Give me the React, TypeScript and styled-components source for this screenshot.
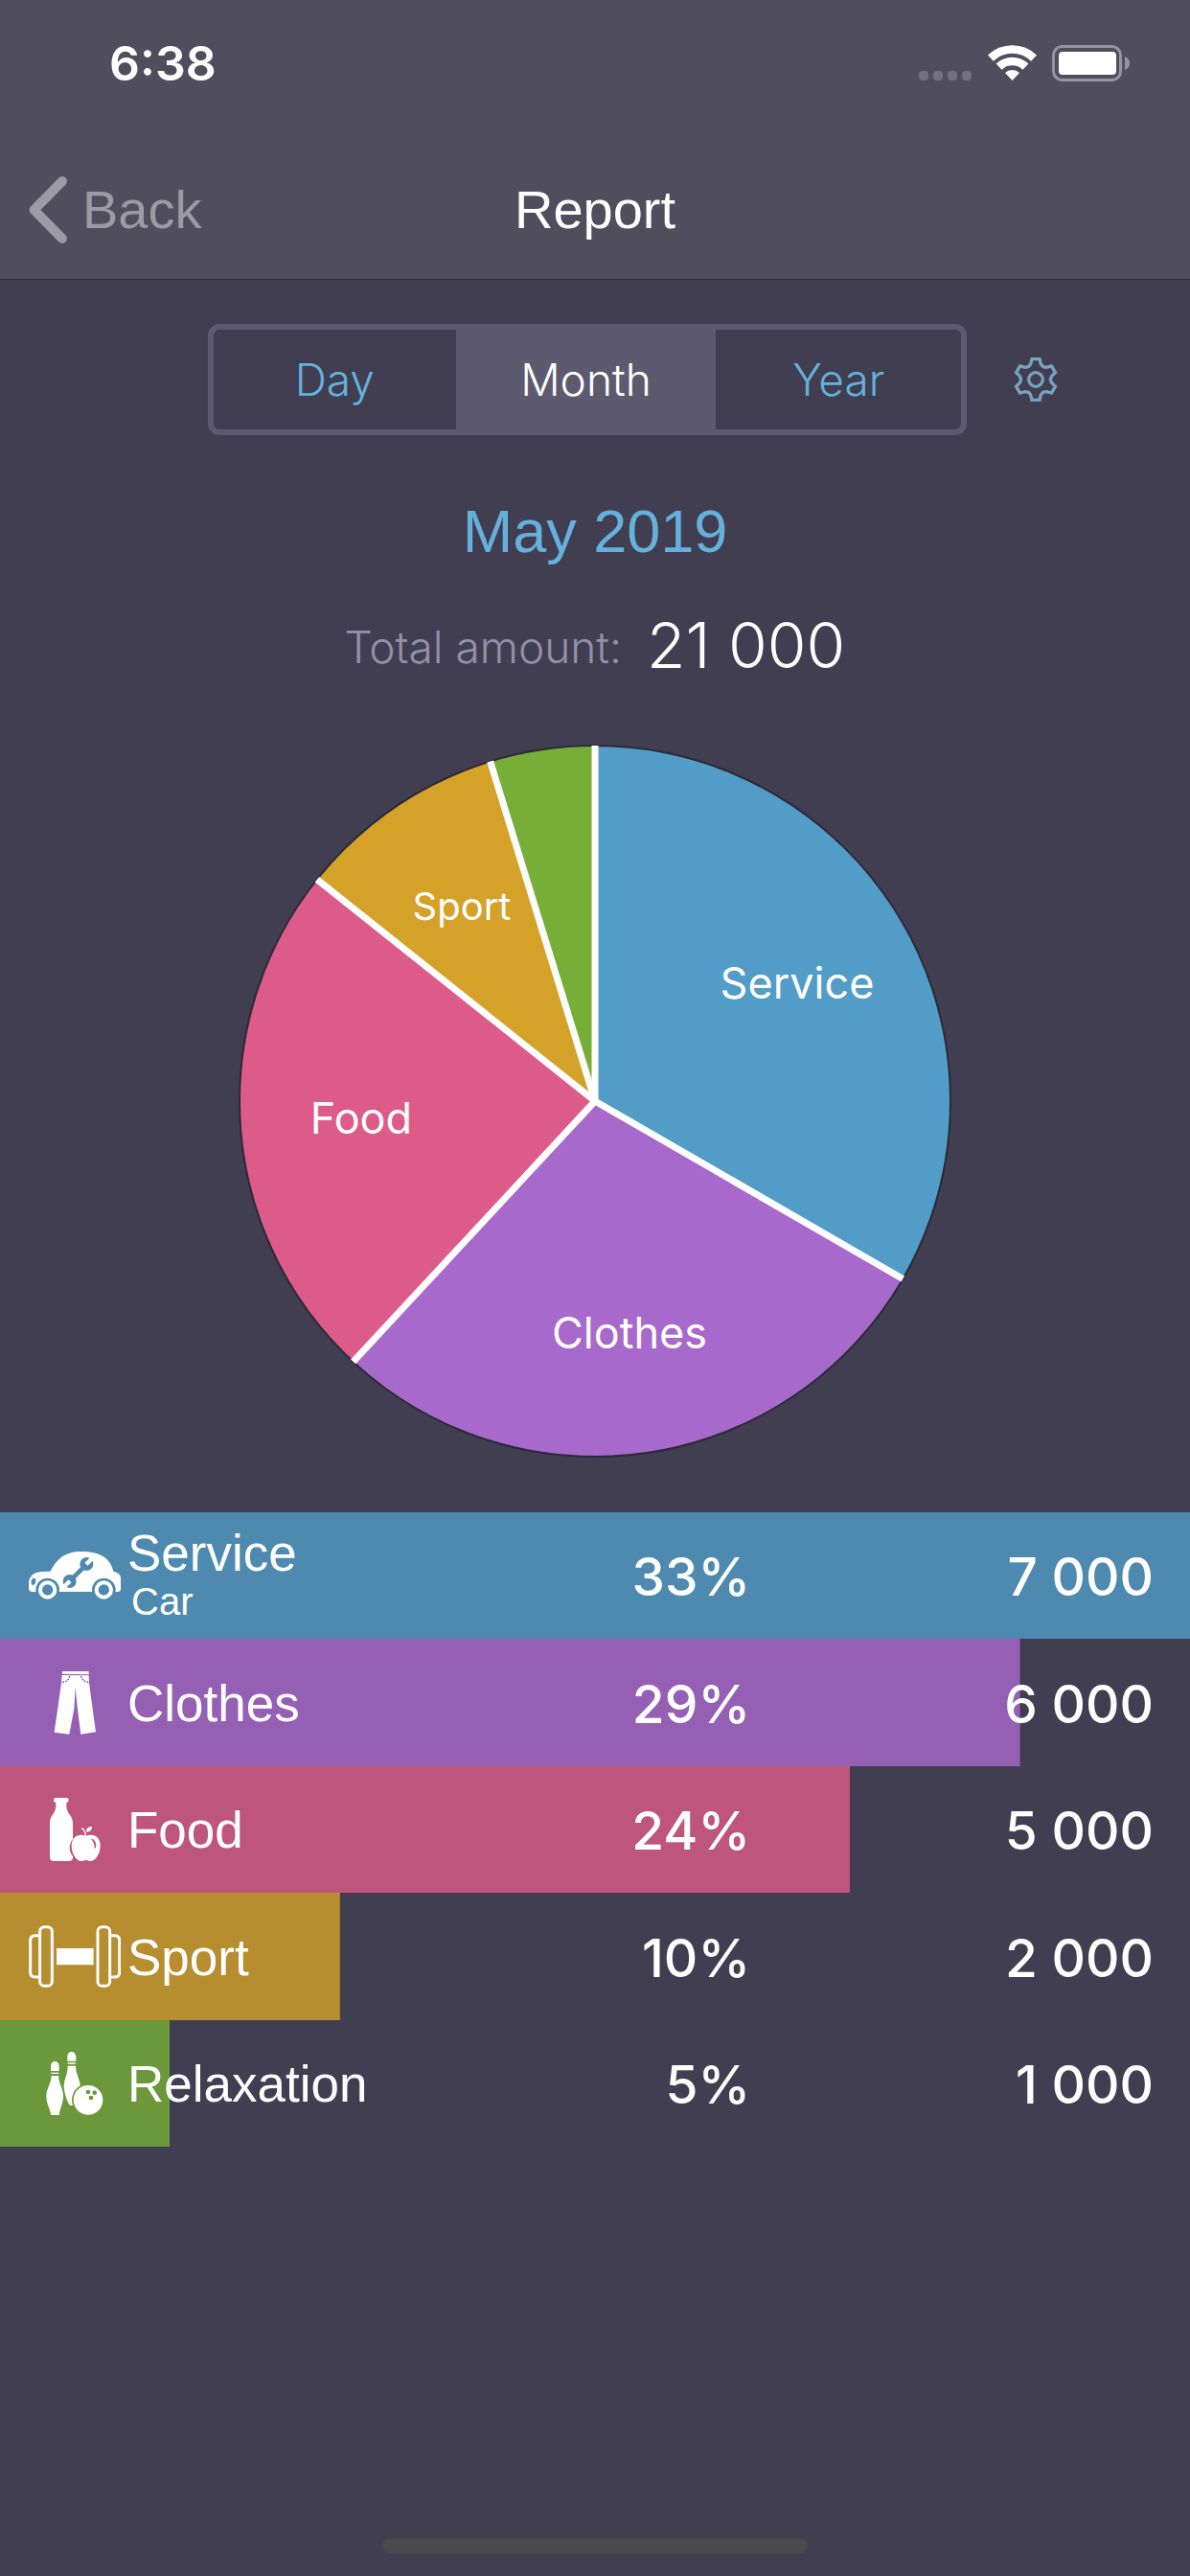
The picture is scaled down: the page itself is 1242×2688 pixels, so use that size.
import React, { useState } from "react";
import styled, { createGlobalStyle } from "styled-components";

const color = {
  page: "#413e52",
  header: "#504d5d",
  line: "#2f2c3b",
  frame: "#5d5a6f",
  accent: "#65b1dc",
  muted: "#9490a8",
};

const helvetica = `"Liberation Sans", Arial, sans-serif`;
const grotesk = `Inter, "Liberation Sans", sans-serif`;

const GlobalStyle = createGlobalStyle`
  *, *::before, *::after { box-sizing: border-box; }
  body { margin: 0; background: ${color.page}; color: #fff; font-family: ${helvetica}; }
  button { border: 0; padding: 0; margin: 0; background: none; font: inherit; color: inherit; cursor: pointer; }
  h1, h2, p { margin: 0; font-weight: 400; }
  svg { display: block; }
`;

const Page = styled.div`
  display: flex;
  flex-direction: column;
  min-height: 100vh;
`;

const Header = styled.header`
  background: ${color.header};
  border-bottom: 1px solid ${color.line};
`;

const StatusBar = styled.div`
  display: flex;
  align-items: center;
  justify-content: space-between;
  height: 132px;
  padding: 0 63px 0 114px;
`;

const Clock = styled.time`
  font: 600 50px/60px ${grotesk};
`;

const StatusIcons = styled.div`
  display: flex;
  align-items: flex-end;
`;

const Signal = styled.div`
  display: flex;
  gap: 5px;
  margin-right: 17px;
  padding-bottom: 1px;
`;

const SignalDot = styled.span`
  width: 10px;
  height: 10px;
  border-radius: 4px;
  background: #737180;
`;

const WifiIcon = styled.svg`
  width: 51px;
  height: 38px;
  margin-right: 16px;
`;

const BatteryIcon = styled.svg`
  width: 81px;
  height: 38px;
`;

const NavBar = styled.nav`
  display: grid;
  grid-template-columns: 1fr auto 1fr;
  align-items: center;
  height: 144px;
  margin-top: 15px;
  padding: 0 30px;
  font-size: 56px;
  line-height: 64px;
`;

const BackButton = styled.button`
  display: flex;
  align-items: center;
  justify-self: start;
  gap: 16px;
  color: #9c9aa3;
`;

const NavTitle = styled.h1`
  font-size: 56px;
  line-height: 64px;
`;

const Chevron = styled.svg`
  width: 40px;
  height: 70px;
`;

const PeriodBar = styled.div`
  display: flex;
  align-items: center;
  gap: 49px;
  padding: 46px 138px 0 217px;
`;

const Segmented = styled.div`
  display: grid;
  flex: 1;
  grid-template-columns: 252fr 271fr 255fr;
  height: 116px;
  border: 6px solid ${color.frame};
  border-radius: 12px;
`;

const Segment = styled.button<{ $active: boolean }>`
  font: 300 46px/56px ${grotesk};
  color: ${(p) => (p.$active ? "#fff" : color.accent)};
  background: ${(p) => (p.$active ? color.frame : "transparent")};
`;

const SettingsButton = styled.button`
  width: 46px;
  height: 46px;
  color: #78a2bd;
`;

const PeriodTitle = styled.h2`
  margin-top: 62px;
  font-size: 63px;
  line-height: 76px;
  text-align: center;
  color: ${color.accent};
`;

const Total = styled.p`
  display: flex;
  align-items: center;
  justify-content: center;
  gap: 26px;
  margin-top: 41px;
`;

const TotalLabel = styled.span`
  padding-top: 4px;
  font: 300 46px/56px ${grotesk};
  color: ${color.muted};
`;

const TotalValue = styled.span`
  font: 300 66px/80px ${grotesk};
`;

const Pie = styled.svg`
  width: 744px;
  max-width: 100%;
  margin: 64px auto 0;
`;

const PieLabel = styled.text<{ $small?: boolean }>`
  font: 400 ${(p) => (p.$small ? 40 : 45)}px ${grotesk};
  fill: #fff;
  text-anchor: middle;
`;

const Categories = styled.table`
  width: 100%;
  margin-top: 57px;
  border-collapse: collapse;
  table-layout: fixed;
`;

const IconColumn = styled.col`
  width: 133px;
`;

const AmountColumn = styled.col`
  width: 459px;
`;

const CategoryRow = styled.tr<{ $tint: string }>`
  height: 132px;
  background-image: linear-gradient(${(p) => p.$tint}, ${(p) => p.$tint});
  background-repeat: no-repeat;

  &:nth-child(even) {
    height: 133px;
  }
`;

const IconCell = styled.td`
  padding: 0 0 0 30px;
`;

const CategoryIcon = styled.svg`
  width: 96px;
  height: 66px;
`;

const NameCell = styled.th`
  padding: 2px 0 0;
  font-size: 53px;
  font-weight: 400;
  line-height: 52px;
  text-align: left;
  white-space: nowrap;
`;

const SubName = styled.div`
  padding-left: 4px;
  font-size: 40px;
  line-height: 48px;
`;

const NumberCell = styled.td`
  padding: 2px 0 0;
  font: 500 55px/64px ${grotesk};
  text-align: right;
  white-space: nowrap;
`;

const AmountCell = styled(NumberCell)`
  padding-right: 38px;
`;

const HomeIndicator = styled.div`
  width: 444px;
  height: 15px;
  margin: auto auto 24px;
  border-radius: 8px;
  background: #4a4a4a;
`;

const CarIcon = () => (
  <CategoryIcon viewBox="0 0 288 198" aria-hidden="true">
    <mask id="car-cut" maskUnits="userSpaceOnUse" x="0" y="0" width="288" height="198">
      <rect width="288" height="198" fill="#fff" />
      <circle cx="59" cy="144" r="37" />
      <circle cx="235" cy="144" r="37" />
      <ellipse cx="15" cy="118" rx="7" ry="11" transform="rotate(12 15 118)" />
      <path d="M180 65 130 115" stroke="#000" strokeWidth="14" />
      <circle cx="181" cy="63" r="21" />
      <circle cx="128" cy="117" r="21" />
      <path d="M180 64 203 41M129 116 106 139" stroke="#fff" strokeWidth="13" />
    </mask>
    <path
      mask="url(#car-cut)"
      fill="#fff"
      d="M0 119C4 97 20 87 44 87L68 86C88 48 112 24 165 24C222 24 256 44 265 86C278 89 288 96 288 106V142Q288 150 278 150H12Q0 150 0 138Z"
    />
    <g fill="none" stroke="#fff" strokeWidth="12">
      <circle cx="59" cy="144" r="23" />
      <circle cx="235" cy="144" r="23" />
    </g>
  </CategoryIcon>
);

const TrousersIcon = () => (
  <CategoryIcon viewBox="0 0 288 198" aria-hidden="true">
    <g fill="#fff">
      <path d="M105 0H188V10L105 8Z" />
      <path d="M104 12 188 13 189 37 210 190 163 197 153 118 146 52 142 118 127 197 80 191 102 37Z" />
    </g>
    <path
      d="M105 34Q126 32 128 13M187 34Q166 32 164 13"
      fill="none"
      stroke="#9560b3"
      strokeWidth="5"
      strokeDasharray="5 4"
    />
  </CategoryIcon>
);

const FoodIcon = () => (
  <CategoryIcon viewBox="0 0 288 198" aria-hidden="true">
    <mask id="bottle-cut" maskUnits="userSpaceOnUse" x="0" y="0" width="288" height="198">
      <rect width="288" height="198" fill="#fff" />
      <ellipse cx="179" cy="156" rx="51" ry="46" />
    </mask>
    <path
      mask="url(#bottle-cut)"
      fill="#fff"
      d="M84 0H120Q126 1 125 8Q125 14 118 15V28C119 50 138 54 138 80V186Q138 198 126 198H78Q66 198 66 186V80C66 54 84 50 85 28V15Q78 14 78 8Q78 1 84 0Z"
    />
    <path
      fill="#fff"
      d="M178 120C160 110 134 118 134 150C134 176 150 198 165 198C172 198 174 195 179 195C184 195 187 198 193 198C208 198 224 176 224 150C224 118 198 110 178 120Z"
    />
    <path fill="#fff" d="M180 107C180 94 188 91 198 90C197 102 191 107 180 107Z" />
    <path d="M165 95Q177 99 178 120" fill="none" stroke="#fff" strokeWidth="4" />
    <path d="M197 129Q214 136 208 157Q207 140 197 129Z" fill="#be557b" stroke="#be557b" strokeWidth="3" />
  </CategoryIcon>
);

const DumbbellIcon = () => (
  <CategoryIcon viewBox="0 0 288 198" aria-hidden="true">
    <g fill="none" stroke="#fff" strokeWidth="9">
      <path d="M35 32H20Q5 32 5 47V147Q5 162 20 162H35M254 32H269Q284 32 284 47V147Q284 162 269 162H254" />
      <rect x="35" y="5" width="38" height="185" rx="14" />
      <rect x="216" y="5" width="38" height="185" rx="14" />
    </g>
    <path fill="#fff" d="M87 72H203V124H87Z" />
  </CategoryIcon>
);

const BowlingIcon = () => (
  <CategoryIcon viewBox="0 0 288 198" aria-hidden="true">
    <mask id="pin-cut" maskUnits="userSpaceOnUse" x="0" y="0" width="288" height="198">
      <rect width="288" height="198" fill="#fff" />
      <circle cx="186" cy="151" r="51" />
    </mask>
    <g fill="#fff">
      <path d="M69 60V44Q71 30 82 30T95 44V60ZM70 65H94V69H70ZM71 75H93C95 104 108 116 108 138C108 162 98 176 95 198H70C66 176 55 162 55 138C55 116 69 104 71 75Z" />
      <path d="M121 29V14Q123 0 134 0T148 14V29ZM122 34H147V38H122Z" />
      <path
        mask="url(#pin-cut)"
        d="M122 44H147C148 74 161 84 161 108C161 134 146 146 141 168H130C124 166 110 130 110 108C110 84 122 74 122 44Z"
      />
      <path
        fillRule="evenodd"
        d="M140 151a46 46 0 1 0 92 0a46 46 0 1 0-92 0ZM179 126a7 7 0 1 1 14 0a7 7 0 1 1-14 0ZM199 128a7 7 0 1 1 14 0a7 7 0 1 1-14 0ZM188 144a7 7 0 1 1 14 0a7 7 0 1 1-14 0Z"
      />
    </g>
  </CategoryIcon>
);

interface Category {
  name: string;
  sub?: string;
  amount: number;
  slice: string;
  tint: string;
  icon: () => React.JSX.Element;
  label?: { x: number; y: number; small?: boolean };
}

const categories: Category[] = [
  { name: "Service", sub: "Car", amount: 7000, slice: "#519dc7", tint: "#4e8aaf", icon: CarIcon, label: { x: 583, y: 265 } },
  { name: "Clothes", amount: 6000, slice: "#a769cc", tint: "#9560b3", icon: TrousersIcon, label: { x: 408, y: 630 } },
  { name: "Food", amount: 5000, slice: "#dd5b88", tint: "#be557b", icon: FoodIcon, label: { x: 128, y: 406 } },
  { name: "Sport", amount: 2000, slice: "#d4a229", tint: "#b68d2f", icon: DumbbellIcon, label: { x: 233, y: 183, small: true } },
  { name: "Relaxation", amount: 1000, slice: "#76ae37", tint: "#6b983b", icon: BowlingIcon },
];

const total = categories.reduce((sum, c) => sum + c.amount, 0);
const largest = Math.max(...categories.map((c) => c.amount));
const format = (n: number) => n.toString().replace(/\B(?=(\d{3})+$)/g, " ");

const CENTER = 372;
const RADIUS = 371;
const pointAt = (fraction: number) => {
  const a = fraction * 2 * Math.PI;
  return `${CENTER + RADIUS * Math.sin(a)} ${CENTER - RADIUS * Math.cos(a)}`;
};

const PieChart = () => {
  let sum = 0;
  const slices = categories.map((c) => {
    const from = sum / total;
    sum += c.amount;
    return { ...c, from, to: sum / total };
  });
  return (
    <Pie viewBox="0 0 744 744" role="img" aria-label="Spending by category">
      {slices.map((s) => (
        <path
          key={s.name}
          fill={s.slice}
          d={`M${CENTER} ${CENTER}L${pointAt(s.from)}A${RADIUS} ${RADIUS} 0 0 1 ${pointAt(s.to)}Z`}
        />
      ))}
      <circle cx={CENTER} cy={CENTER} r={RADIUS} fill="none" stroke="#2c2a38" strokeWidth="2" />
      {slices.map((s) => (
        <path key={s.name} d={`M${CENTER} ${CENTER}L${pointAt(s.from)}`} stroke="#fff" strokeWidth="7" />
      ))}
      {slices.map(
        (s) =>
          s.label && (
            <PieLabel key={s.name} x={s.label.x} y={s.label.y} $small={s.label.small}>
              {s.name}
            </PieLabel>
          )
      )}
    </Pie>
  );
};

const TOOTH = [[-16, -48], [-12, -64], [12, -64], [16, -48], [23, -40]];
const gearPath =
  [0, 60, 120, 180, 240, 300]
    .map((deg, i) => {
      const a = (deg * Math.PI) / 180;
      return TOOTH.map(([x, y], j) => {
        const px = 69 + x * Math.cos(a) - y * Math.sin(a);
        const py = 69 + x * Math.sin(a) + y * Math.cos(a);
        return `${i + j ? "L" : "M"}${px.toFixed(1)} ${py.toFixed(1)}`;
      }).join("");
    })
    .join("") + "Z";

const GearIcon = () => (
  <svg viewBox="0 0 138 138" width="46" height="46" fill="none" stroke="currentColor" strokeWidth="10" aria-hidden="true">
    <path d={gearPath} />
    <circle cx="69" cy="69" r="22" />
  </svg>
);

const periods = ["Day", "Month", "Year"];

export default function App() {
  const [period, setPeriod] = useState("Month");

  return (
    <Page>
      <GlobalStyle />
      <Header>
        <StatusBar>
          <Clock>6:38</Clock>
          <StatusIcons>
            <Signal>
              <SignalDot />
              <SignalDot />
              <SignalDot />
              <SignalDot />
            </Signal>
            <WifiIcon viewBox="0 0 51 38" aria-hidden="true">
              <g fill="none" stroke="#fff">
                <path d="M2.9 13.6A32.5 32.5 0 0 1 48.1 13.6" strokeWidth="8.5" />
                <path d="M11.6 22.6A20 20 0 0 1 39.4 22.6" strokeWidth="8.5" />
              </g>
              <path d="M25.5 37 18 29A11 11 0 0 1 33 29Z" fill="#fff" />
            </WifiIcon>
            <BatteryIcon viewBox="0 0 81 38" aria-hidden="true">
              <rect x="1.5" y="1.5" width="70" height="35" rx="9" fill="none" stroke="#9694a0" strokeWidth="3" />
              <rect x="7" y="7" width="60" height="24" rx="4" fill="#fff" />
              <path d="M76 12Q81 14 81 19T76 26Z" fill="#9694a0" />
            </BatteryIcon>
          </StatusIcons>
        </StatusBar>
        <NavBar>
          <BackButton type="button">
            <Chevron viewBox="0 0 40 70" aria-hidden="true">
              <path
                d="M35 5 5.5 35 35 65"
                fill="none"
                stroke="currentColor"
                strokeWidth="10"
                strokeLinecap="round"
                strokeLinejoin="round"
              />
            </Chevron>
            Back
          </BackButton>
          <NavTitle>Report</NavTitle>
        </NavBar>
      </Header>
      <main>
        <PeriodBar>
          <Segmented role="group" aria-label="Period">
            {periods.map((p) => (
              <Segment key={p} type="button" $active={p === period} aria-pressed={p === period} onClick={() => setPeriod(p)}>
                {p}
              </Segment>
            ))}
          </Segmented>
          <SettingsButton type="button" aria-label="Settings">
            <GearIcon />
          </SettingsButton>
        </PeriodBar>
        <PeriodTitle>May 2019</PeriodTitle>
        <Total>
          <TotalLabel>Total amount:</TotalLabel>
          <TotalValue>{format(total)}</TotalValue>
        </Total>
        <PieChart />
        <Categories>
          <colgroup>
            <IconColumn />
            <col />
            <col />
            <AmountColumn />
          </colgroup>
          <tbody>
            {categories.map((c) => (
              <CategoryRow
                key={c.name}
                $tint={c.tint}
                style={{ backgroundSize: `${(c.amount / largest) * 100}% 100%` }}
              >
                <IconCell>
                  <c.icon />
                </IconCell>
                <NameCell scope="row">
                  {c.name}
                  {c.sub && <SubName>{c.sub}</SubName>}
                </NameCell>
                <NumberCell>{Math.round((c.amount / total) * 100)}%</NumberCell>
                <AmountCell>{format(c.amount)}</AmountCell>
              </CategoryRow>
            ))}
          </tbody>
        </Categories>
      </main>
      <HomeIndicator />
    </Page>
  );
}
